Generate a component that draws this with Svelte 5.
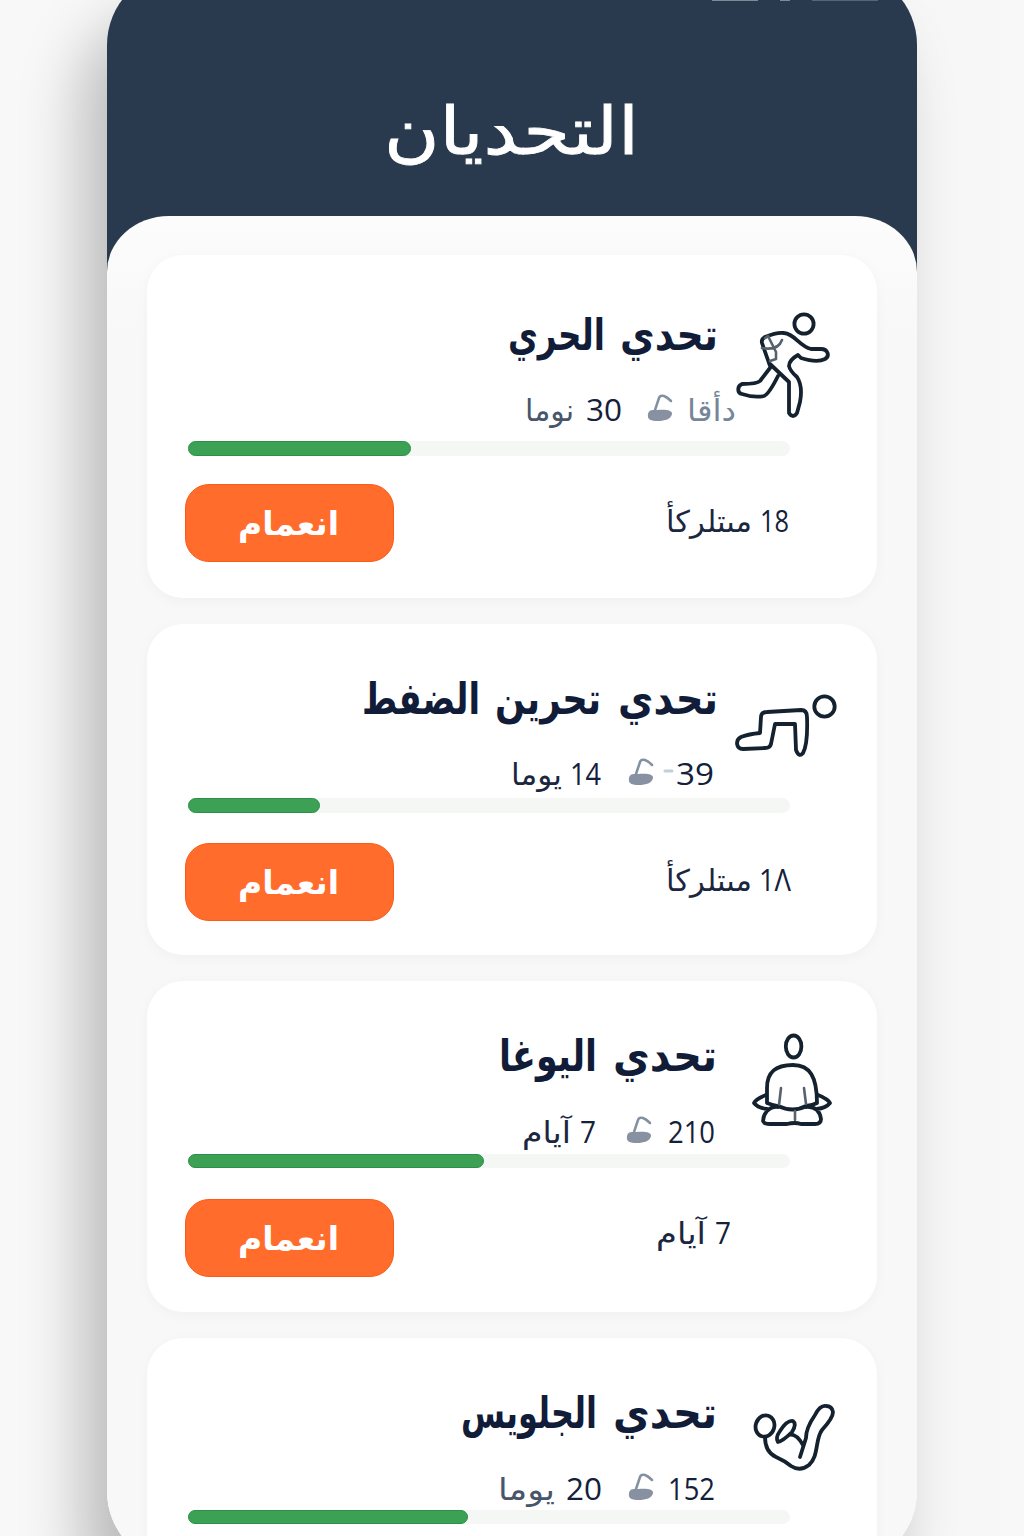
<script>
  const challenges = [
    {
      kind: 'run',
      title: [
        { text: 'تحدي', right: 718, width: 98 },
        { text: 'الحري', right: 605, width: 97 }
      ],
      bar: 223,
      count: { text: 'دأقا', right: 736, width: 49, faded: true },
      pinX: 647,
      days: { word: 'نوما', number: '30', wordRight: 574, wordWidth: 49, numRight: 622, numWidth: 36, soft: true },
      people: { number: '18', word: 'مىتلركأ', numRight: 789, numWidth: 29, wordRight: 752, wordWidth: 86 }
    },
    {
      kind: 'pushup',
      title: [
        { text: 'تحدي', right: 718, width: 100 },
        { text: 'تحرين', right: 601, width: 106 },
        { text: 'الضفط', right: 480, width: 118 }
      ],
      bar: 132,
      count: { text: '39', right: 714, width: 38, dash: true },
      pinX: 628,
      days: { word: 'يوما', number: '14', wordRight: 562, wordWidth: 51, numRight: 601, numWidth: 31 },
      people: { number: '1Λ', word: 'مىتلركأ', numRight: 791, numWidth: 32, wordRight: 752, wordWidth: 86 }
    },
    {
      kind: 'yoga',
      title: [
        { text: 'تحدي', right: 717, width: 104 },
        { text: 'اليوغا', right: 597, width: 98 }
      ],
      bar: 296,
      count: { text: '210', right: 715, width: 47 },
      pinX: 626,
      days: { word: 'آيام', number: '7', wordRight: 571, wordWidth: 49, numRight: 596, numWidth: 16 },
      people: { number: '7', word: 'آيام', numRight: 731, numWidth: 16, wordRight: 706, wordWidth: 50 }
    },
    {
      kind: 'situp',
      title: [
        { text: 'تحدي', right: 717, width: 104 },
        { text: 'الجلويس', right: 597, width: 136 }
      ],
      bar: 280,
      count: { text: '152', right: 715, width: 47 },
      pinX: 628,
      days: { word: 'يوما', number: '20', wordRight: 555, wordWidth: 57, numRight: 602, numWidth: 36, soft: true }
    }
  ];
</script>

{#snippet meta(c)}
  <svg class="line" viewBox="188 0 602 50" width="602" height="50">
    <text class="ar" class:soft={c.days.soft} x={c.days.wordRight} y="33.5" textLength={c.days.wordWidth} lengthAdjust="spacingAndGlyphs">{c.days.word}</text>
    <text class="num" x={c.days.numRight} y="33.5" textLength={c.days.numWidth} lengthAdjust="spacingAndGlyphs">{c.days.number}</text>
    <g transform="translate({c.pinX} 7)">
      <path class="pin-base" d="M1 20C2 15 6 16 10 16C18 15 26 16 25 20C24 25 18 27 11 27C4 27 0 26 1 20Z" />
      <path class="pin-stem" d="M8 16L12 4Q13 1 17 2Q20 3 24 7" />
    </g>
    {#if c.count.dash}
      <path class="dash" d="M665 20H672" />
    {/if}
    <text
      class={c.count.faded ? 'ar faded' : 'num'}
      x={c.count.right}
      y="33.5"
      textLength={c.count.width}
      lengthAdjust="spacingAndGlyphs">{c.count.text}</text>
  </svg>
{/snippet}

{#snippet figure(kind)}
  <svg class="figure" viewBox="730 0 110 130" width="110" height="130">
    {#if kind === 'run'}
      <g transform="translate(0 -295)">
        <circle cx="804" cy="324" r="9.6" />
        <path d="M770 366L762 343Q761 339 765 337Q777 332 784 333C795 334 799 346 811 349H821C828 349 830 356 825 359Q817 363 801 358L798 355Q789 360 789 366Q790 371 797 377Q803 386 800 402L797 413Q793 419 789 413L789 382L770 364M770 368L760 381Q757 384 742 384C737 386 737 393 742 394Q754 398 764 396Q769 394 778 376" />
        <path class="thin" d="M762 348Q778 351 782 340M765 338L768 336L776 352V359L770 361" />
      </g>
    {:else if kind === 'pushup'}
      <g transform="translate(0 -664)">
        <circle cx="824.500" cy="706.500" r="10.200" />
        <path d="M760 733L761 717Q761 712 767 712L801 710Q807 710 807 717Q808 744 803 753Q799 758 796 750L795 724H775L771 744Q770 748 765 748L743 749C736 749 735 740 741 737Q749 734 760 733Z" />
      </g>
    {:else if kind === 'yoga'}
      <g transform="translate(0 -1020)">
        <ellipse cx="793.600" cy="1045.500" rx="7.800" ry="11" />
        <path d="M767 1102V1087C767 1070 777 1064 793 1064C810 1064 817 1076 817 1102Q811 1105 806 1105Q793 1112 778 1105Q772 1104 767 1102Z" />
        <path class="thin" d="M781 1087L779 1104M804 1087L806 1103M795 1110V1119" />
        <path d="M766 1094Q756 1098 754 1102Q758 1107 767 1108M818 1094Q828 1098 830 1102Q826 1107 817 1108M778 1106C768 1105 763 1114 763 1120Q764 1123 770 1123H787Q795 1121 801 1123H815Q821 1123 821 1118Q819 1105 806 1106" />
      </g>
    {:else}
      <g transform="translate(0 -1378)">
        <ellipse cx="765" cy="1426" rx="9.300" ry="10.800" transform="rotate(18 765 1426)" />
        <path d="M765 1437Q765 1452 776 1457Q785 1461 791 1466Q800 1472 809 1465C819 1456 815 1439 822 1430Q833 1418 833 1412Q832 1406 826 1406Q820 1405 815 1415Q806 1428 806 1438L800 1457" />
        <path d="M778 1442Q775 1438 780 1431Q787 1420 793 1421Q797 1424 792 1432Q783 1441 778 1442ZM789 1435Q796 1433 803 1445" />
      </g>
    {/if}
  </svg>
{/snippet}

<div class="stage">
  <main class="phone">
    <header>
      <div class="status"><i></i><i></i><i></i></div>
      <h1>
        <svg width="252" height="90" viewBox="0 0 252 90">
          <text x="253" y="64" textLength="255" lengthAdjust="spacingAndGlyphs">التحديان</text>
        </svg>
      </h1>
    </header>
    <div class="sheet">
      {#each challenges as c}
        <article class={c.kind}>
          <div class="head">
            <h2>
              <svg width="358" height="70" viewBox="360 0 358 70">
                {#each c.title as t}
                  <text x={t.right} y="46" textLength={t.width} lengthAdjust="spacingAndGlyphs">{t.text}</text>
                {/each}
              </svg>
            </h2>
            {@render figure(c.kind)}
          </div>
          {@render meta(c)}
          <div class="track"><div class="fill" style="width:{c.bar}px"></div></div>
          {#if c.people}
            <div class="foot">
              <button type="button">
                <svg width="100" height="60" viewBox="0 0 100 60">
                  <text x="99" y="42" textLength="101" lengthAdjust="spacingAndGlyphs">انعمام</text>
                </svg>
              </button>
              <svg class="people" viewBox="600 0 200 60" width="200" height="60">
                <text class="num" x={c.people.numRight} y="40" textLength={c.people.numWidth} lengthAdjust="spacingAndGlyphs">{c.people.number}</text>
                <text class="ar" x={c.people.wordRight} y="40" textLength={c.people.wordWidth} lengthAdjust="spacingAndGlyphs">{c.people.word}</text>
              </svg>
            </div>
          {/if}
        </article>
      {/each}
    </div>
  </main>
</div>

<style>
  :global(body) {
    margin: 0;
  }
  .stage {
    box-sizing: border-box;
    width: 1024px;
    height: 1536px;
    overflow: hidden;
    padding-left: 107px;
    background: linear-gradient(90deg, #f8f8f8, #f6f6f6 88%, #f8f8f8);
    font-family: 'Open Sans', 'DejaVu Sans', sans-serif;
  }
  .phone {
    width: 810px;
    height: 1596px;
    margin-top: -30px;
    border-radius: 75px;
    background: linear-gradient(#2a3a4e 0 340px, #f9f9f9 340px);
    box-shadow: -24px 50px 62px rgba(0, 0, 0, 0.25);
    overflow: hidden;
  }
  header {
    height: 246px;
    display: flex;
    flex-direction: column;
    align-items: center;
    box-sizing: border-box;
    padding-top: 30px;
  }
  .status {
    align-self: flex-end;
    display: flex;
    gap: 22px;
    height: 1px;
    margin: 0 39px 89px 0;
  }
  .status i {
    width: 46px;
    background: #7f8a97;
  }
  .status i:nth-child(2) {
    width: 10px;
  }
  .status i:nth-child(3) {
    width: 66px;
    background: #56657a;
  }
  h1,
  h2 {
    margin: 0;
    line-height: 0;
    font-weight: 400;
  }
  svg {
    display: block;
    overflow: visible;
    flex: none;
  }
  text {
    direction: rtl;
    font-family: 'DejaVu Sans', sans-serif;
  }
  h1 text {
    font-size: 66px;
    fill: #fff;
    stroke: #fff;
    stroke-width: 0.8;
  }
  .sheet {
    box-sizing: border-box;
    height: 1350px;
    padding: 39px 40px 0;
    border-radius: 62px 62px 0 0 / 56px 56px 0 0;
    background: linear-gradient(#fcfcfc, #f8f8f8 120px);
    display: flex;
    flex-direction: column;
    gap: 25.500px;
  }
  article {
    box-sizing: border-box;
    flex: none;
    width: 730px;
    height: 331.500px;
    padding: 42px 37px 0 38px;
    border-radius: 36px;
    background: #fff;
    box-shadow: 0 3px 14px rgba(30, 30, 30, 0.035);
  }
  article.run {
    height: 343px;
    padding-top: 49px;
  }
  .head {
    display: flex;
    justify-content: flex-end;
    height: 85px;
    gap: 12px;
  }
  .run .head {
    height: 83px;
  }
  .yoga .head,
  .situp .head {
    height: 86px;
  }
  .figure {
    margin-top: -2px;
  }
  .run .figure {
    margin-top: -9px;
  }
  h2 {
    padding-top: 2px;
  }
  .run h2 {
    padding-top: 0;
  }
  h2 text {
    font-size: 44px;
    font-weight: 700;
    fill: #111c38;
  }
  .line {
    margin-left: 3px;
  }
  .ar {
    font-size: 30px;
    fill: #1b2740;
  }
  .num {
    font-family: 'Open Sans', sans-serif;
    font-size: 31.500px;
    direction: ltr;
    text-anchor: end;
    fill: #14213a;
  }
  .soft {
    fill: #48566b;
  }
  .faded {
    fill: #76869a;
  }
  .pin-base {
    fill: #8791a1;
  }
  .pin-stem {
    fill: none;
    stroke: #8390a1;
    stroke-width: 2.500;
    stroke-linecap: round;
  }
  .dash {
    stroke: #c3ced9;
    stroke-width: 3;
    stroke-linecap: round;
  }
  .figure {
    fill: none;
    stroke: #14212f;
    stroke-width: 3.800;
    stroke-linecap: round;
    stroke-linejoin: round;
  }
  .figure .thin {
    stroke: #56636f;
    stroke-width: 2.600;
  }
  .track {
    width: 602px;
    height: 15px;
    margin: -3px 0 0 3px;
    border-radius: 8px;
    background: #f5f7f5;
  }
  .run .track {
    margin-top: 4px;
  }
  .yoga .track {
    height: 14px;
    margin-top: -5px;
  }
  .situp .track {
    height: 14px;
    margin-top: -6px;
  }
  .fill {
    box-sizing: border-box;
    height: 100%;
    border: 1px solid #2c9148;
    border-radius: 8px;
    background: #3ca055;
  }
  .foot {
    display: flex;
    justify-content: space-between;
    margin-top: 30px;
  }
  .run .foot {
    margin-top: 28px;
  }
  .yoga .foot {
    margin-top: 31px;
  }
  button {
    display: flex;
    align-items: center;
    justify-content: center;
    width: 209px;
    height: 78px;
    padding: 0;
    border: 1px solid #fa5c18;
    border-radius: 24px;
    background: #ff6c2c;
  }
  button text {
    font-size: 33px;
    font-weight: 700;
    fill: #fff;
  }
  .people {
    margin: 8px 40px 0 0;
  }
  .yoga .people {
    margin-top: 5px;
  }
</style>
